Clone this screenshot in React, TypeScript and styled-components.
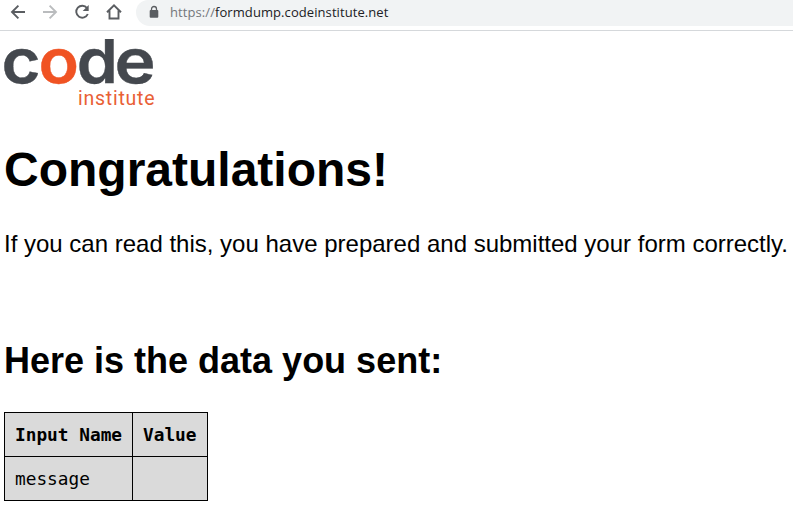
import React from "react";
import styled, { createGlobalStyle } from "styled-components";

const GlobalStyle = createGlobalStyle`
  body {
    margin: 0;
    background: #fff;
    color: #000;
    overflow: hidden;
    font-family: "Liberation Sans", Arial, sans-serif;
    font-size: 24px;
  }
`;

const Toolbar = styled.header`
  display: flex;
  box-sizing: border-box;
  height: 31px;
  padding-left: 10px;
  border-bottom: 1px solid #d5d8db;
`;

const NavButtons = styled.nav`
  display: flex;
  gap: 16px;
  height: 24px;
  width: 126px;
  flex: none;
`;

const NavIcon = styled.svg<{ $muted?: boolean }>`
  display: block;
  width: 16px;
  height: 24px;
  fill: none;
  stroke: ${(p) => (p.$muted ? "#babcbe" : "#5a5d61")};
  stroke-width: 1.9;
`;

const AddressBar = styled.div`
  display: flex;
  align-items: center;
  flex: 1;
  box-sizing: border-box;
  height: 26px;
  padding: 0 0 2px 13px;
  border-radius: 12px 0 0 14px;
  background: #f1f3f4;
`;

const LockIcon = styled.svg`
  width: 10px;
  height: 14px;
  margin-right: 11px;
`;

const Url = styled.span`
  font: 13px/20px "Open Sans", "Noto Sans", sans-serif;
  color: #202124;
  letter-spacing: 0.08px;
`;

const Scheme = styled.span`
  color: #74777b;
`;

const Page = styled.main`
  padding: 8px 4px 0;
`;

const Logo = styled.svg`
  display: block;
  width: 154px;
  height: 70px;
  overflow: visible;
`;

const Wordmark = styled.text<{ $accent?: boolean }>`
  font: 600 61px Inter, sans-serif;
  fill: ${(p) => (p.$accent ? "#f05323" : "#44484e")};
  stroke: ${(p) => (p.$accent ? "#f05323" : "#44484e")};
  stroke-width: 0.4px;
`;

const Tagline = styled.text`
  font: 19.5px Roboto, sans-serif;
  fill: #e96035;
`;

const Title = styled.h1`
  margin: 33px 0 0;
  font-size: 48px;
  line-height: 56px;
`;

const Message = styled.p`
  margin: 32px 0 0;
  line-height: 28px;
  white-space: nowrap;
`;

const Subtitle = styled.h2`
  margin: 82px 0 0;
  font-size: 36px;
  line-height: 42px;
`;

const DataTable = styled.table`
  width: 204px;
  margin-top: 30px;
  table-layout: fixed;
  border-collapse: collapse;
  background: #dadada;
  font: 17.8px/24px "DejaVu Sans Mono", monospace;
`;

const Cell = styled.td`
  box-sizing: border-box;
  height: 44px;
  padding: 0 10px;
  border: 1px solid #000;
  text-align: left;
  white-space: nowrap;
`;

const NameColumn = styled.col`
  width: 128px;
`;

const letters = [
  { char: "c", x: -2.6, stretch: 1.1 },
  { char: "o", x: 34.5, stretch: 1.09 },
  { char: "d", x: 72.7, stretch: 1.08 },
  { char: "e", x: 110.6, stretch: 1.14 },
];

export default function App() {
  return (
    <>
      <GlobalStyle />
      <Toolbar>
        <NavButtons>
          <NavIcon viewBox="0 0 16 24">
            <path d="M15 12H2.5M8.4 5.6 2 12l6.4 6.4" />
          </NavIcon>
          <NavIcon viewBox="0 0 16 24" $muted>
            <path d="M1 12h12.5M7.6 5.6 14 12l-6.4 6.4" />
          </NavIcon>
          <NavIcon viewBox="0 0 16 24">
            <path d="M13 8A6 6 0 1 0 13.8 14" />
            <path d="M14.7 5v6H8.7z" fill="#5a5d61" stroke="none" />
          </NavIcon>
          <NavIcon viewBox="0 0 16 24">
            <path d="M1 12.3 8 5.4l7 6.9M3.5 10.5v8h9v-8" />
          </NavIcon>
        </NavButtons>
        <AddressBar>
          <LockIcon viewBox="0 0 10 14">
            <path d="M2.5 6V4a2.5 2.5 0 0 1 5 0v2" fill="none" stroke="#5a5d61" strokeWidth="1.3" />
            <rect x="0.7" y="5" width="8.6" height="7.8" rx="1" fill="#5a5d61" />
          </LockIcon>
          <Url>
            <Scheme>https://</Scheme>formdump.codeinstitute.net
          </Url>
        </AddressBar>
      </Toolbar>
      <Page>
        <Logo viewBox="0 0 154 70" aria-label="code institute">
          <clipPath id="flat-ascender">
            <rect x="-4" y="0" width="160" height="48" />
          </clipPath>
          <g clipPath="url(#flat-ascender)">
            {letters.map((l) => (
              <Wordmark
                key={l.char}
                transform={`translate(${l.x} 44) scale(${l.stretch} 1)`}
                $accent={l.char === "o"}
              >
                {l.char}
              </Wordmark>
            ))}
          </g>
          <Tagline x="74" y="66" textLength="76.5" lengthAdjust="spacing">
            institute
          </Tagline>
        </Logo>
        <Title>Congratulations!</Title>
        <Message>If you can read this, you have prepared and submitted your form correctly.</Message>
        <Subtitle>Here is the data you sent:</Subtitle>
        <DataTable>
          <colgroup>
            <NameColumn />
            <col />
          </colgroup>
          <tbody>
            <tr>
              <Cell as="th">Input Name</Cell>
              <Cell as="th">Value</Cell>
            </tr>
            <tr>
              <Cell>message</Cell>
              <Cell />
            </tr>
          </tbody>
        </DataTable>
      </Page>
    </>
  );
}
